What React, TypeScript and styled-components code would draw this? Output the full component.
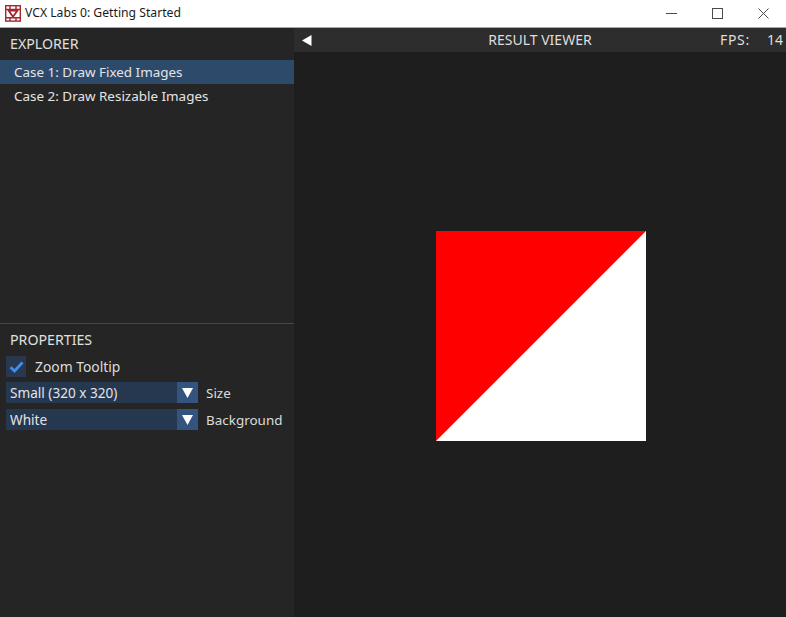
import styled, { createGlobalStyle } from "styled-components";
import { useState } from "react";

const GlobalStyle = createGlobalStyle`
  html, body {
    margin: 0;
    padding: 0;
    height: 100%;
    background: #1e1e1e;
    font-family: "Noto Sans", "Open Sans", sans-serif;
  }
  #root {
    height: 100%;
  }
`;

const Window = styled.div`
  width: 786px;
  height: 617px;
  display: flex;
  flex-direction: column;
  overflow: hidden;
`;

const TitleBar = styled.div`
  height: 27px;
  flex: none;
  display: flex;
  align-items: center;
  background: #fff;
  border-bottom: 1px solid #a8a8a8;
  padding-left: 5px;
`;

const AppTitle = styled.span`
  margin: 0 0 2px 4px;
  font-size: 12.2px;
  color: #1a1a1a;
  white-space: nowrap;
`;

const WindowButtons = styled.div`
  margin-left: auto;
  display: flex;
  align-items: flex-start;
  align-self: flex-start;
`;

const WindowButton = styled.div`
  width: 46px;
  height: 26px;
  display: flex;
  align-items: center;
  justify-content: center;
`;

const Body = styled.div`
  flex: 1;
  display: flex;
  min-height: 0;
`;

const Sidebar = styled.aside`
  width: 294px;
  flex: none;
  display: flex;
  flex-direction: column;
  background: #252525;
`;

const ExplorerPane = styled.div`
  height: 295px;
  flex: none;
  border-bottom: 1px solid #474747;
`;

const PaneTitle = styled.div`
  height: 32px;
  box-sizing: border-box;
  padding: 0 0 2px 10px;
  display: flex;
  align-items: center;
  font-size: 14.2px;
  color: #e0e0e0;
`;

const CaseRow = styled.div<{ $active?: boolean }>`
  height: 24px;
  padding-left: 14px;
  box-sizing: border-box;
  display: flex;
  align-items: center;
  font-size: 13.45px;
  color: #e4e4e4;
  background: ${(p) => (p.$active ? "#2d4a6b" : "transparent")};
`;

const PropertiesPane = styled.div`
  display: flex;
  flex-direction: column;
`;

const PropRow = styled.div<{ $top: number }>`
  height: 21px;
  margin-top: ${(p) => p.$top}px;
  padding-left: 6px;
  display: flex;
  align-items: center;
`;

const CheckBox = styled.div`
  width: 20px;
  height: 21px;
  background: #29374f;
  display: flex;
  align-items: center;
  justify-content: center;
`;

const PropLabel = styled.span<{ $gap: number; $size?: number }>`
  margin-left: ${(p) => p.$gap}px;
  font-size: ${(p) => p.$size ?? 13.45}px;
  color: #dcdcdc;
`;

const Select = styled.div`
  width: 192px;
  height: 21px;
  display: flex;
  background: #263750;
`;

const SelectValue = styled.span`
  flex: 1;
  padding-left: 4px;
  font-size: 13.6px;
  line-height: 21px;
  color: #e4e4e4;
`;

const SelectArrow = styled.div`
  width: 21px;
  display: flex;
  align-items: center;
  justify-content: center;
  background: #33547f;
`;

const Main = styled.main`
  flex: 1;
  display: flex;
  flex-direction: column;
  background: #1e1e1e;
`;

const ViewerBar = styled.div`
  height: 24px;
  flex: none;
  display: flex;
  align-items: center;
  background: #2d2d2d;
  position: relative;
  font-size: 14px;
  color: #dedede;
`;

const BackButton = styled.div`
  width: 25px;
  display: flex;
  justify-content: center;
`;

const ViewerTitle = styled.span`
  flex: 1;
  text-align: center;
  margin: 0 25px 2px 0;
`;

const Fps = styled.span`
  position: absolute;
  right: 3px;
  top: 0;
  height: 22px;
  display: flex;
  align-items: center;
  gap: 17px;
`;

const FpsLabel = styled.span`
  letter-spacing: 0.7px;
`;

const Stage = styled.div`
  flex: 1;
  display: flex;
  align-items: flex-start;
  justify-content: center;
  padding-top: 179px;
`;

const Picture = styled.svg`
  width: 210px;
  height: 210px;
  display: block;
  margin-left: 2px;
`;

function Arrow() {
  return (
    <svg width="11" height="10" viewBox="0 0 11 10">
      <path d="M0 0H11L5.5 10Z" fill="#fff" />
    </svg>
  );
}

function Logo() {
  return (
    <svg width="16" height="17" viewBox="0 0 16 17" fill="none" stroke="#a3272c" strokeWidth="1.4">
      <rect x="0.7" y="0.7" width="14.6" height="15.4" />
      <path d="M0.7 4.4H15.3M0.7 12.8H15.3M5 0.7V4.4M11 0.7V4.4M5 12.8V16.1M11 12.8V16.1" />
      <path d="M3.6 5.6H12.4L8 11.8Z" strokeWidth="1.8" />
    </svg>
  );
}

export default function App() {
  const [selected, setSelected] = useState(0);
  const cases = ["Case 1: Draw Fixed Images", "Case 2: Draw Resizable Images"];

  return (
    <>
      <GlobalStyle />
      <Window>
        <TitleBar>
          <Logo />
          <AppTitle>VCX Labs 0: Getting Started</AppTitle>
          <WindowButtons>
            <WindowButton>
              <svg width="11" height="11" viewBox="0 0 11 11" stroke="#4a4a4a" fill="none">
                <path d="M0 5.5H11" />
              </svg>
            </WindowButton>
            <WindowButton>
              <svg width="11" height="11" viewBox="0 0 11 11" stroke="#4a4a4a" fill="none">
                <rect x="0.5" y="0.5" width="10" height="10" />
              </svg>
            </WindowButton>
            <WindowButton>
              <svg width="11" height="11" viewBox="0 0 11 11" stroke="#4a4a4a" fill="none">
                <path d="M0.5 0.5L10.5 10.5M10.5 0.5L0.5 10.5" />
              </svg>
            </WindowButton>
          </WindowButtons>
        </TitleBar>
        <Body>
          <Sidebar>
            <ExplorerPane>
              <PaneTitle>EXPLORER</PaneTitle>
              {cases.map((c, i) => (
                <CaseRow key={c} $active={i === selected} onClick={() => setSelected(i)}>
                  {c}
                </CaseRow>
              ))}
            </ExplorerPane>
            <PropertiesPane>
              <PaneTitle>PROPERTIES</PaneTitle>
              <PropRow $top={0}>
                <CheckBox>
                  <svg width="15" height="12" viewBox="0 0 15 12" fill="none">
                    <path d="M1.5 6.2L5.5 10L13.5 1.5" stroke="#3f8ef0" strokeWidth="2.8" />
                  </svg>
                </CheckBox>
                <PropLabel $gap={9} $size={13.85}>
                  Zoom Tooltip
                </PropLabel>
              </PropRow>
              <PropRow $top={5}>
                <Select>
                  <SelectValue>Small (320 x 320)</SelectValue>
                  <SelectArrow>
                    <Arrow />
                  </SelectArrow>
                </Select>
                <PropLabel $gap={8}>Size</PropLabel>
              </PropRow>
              <PropRow $top={6}>
                <Select>
                  <SelectValue>White</SelectValue>
                  <SelectArrow>
                    <Arrow />
                  </SelectArrow>
                </Select>
                <PropLabel $gap={8}>Background</PropLabel>
              </PropRow>
            </PropertiesPane>
          </Sidebar>
          <Main>
            <ViewerBar>
              <BackButton>
                <svg width="10" height="11" viewBox="0 0 10 11">
                  <path d="M9.5 0V11L0 5.5Z" fill="#fff" />
                </svg>
              </BackButton>
              <ViewerTitle>RESULT VIEWER</ViewerTitle>
              <Fps>
                <FpsLabel>FPS:</FpsLabel>
                <span>14</span>
              </Fps>
            </ViewerBar>
            <Stage>
              <Picture viewBox="0 0 210 210">
                <rect width="210" height="210" fill="#fff" />
                <path d="M0 0H210L0 210Z" fill="#f00" />
              </Picture>
            </Stage>
          </Main>
        </Body>
      </Window>
    </>
  );
}
